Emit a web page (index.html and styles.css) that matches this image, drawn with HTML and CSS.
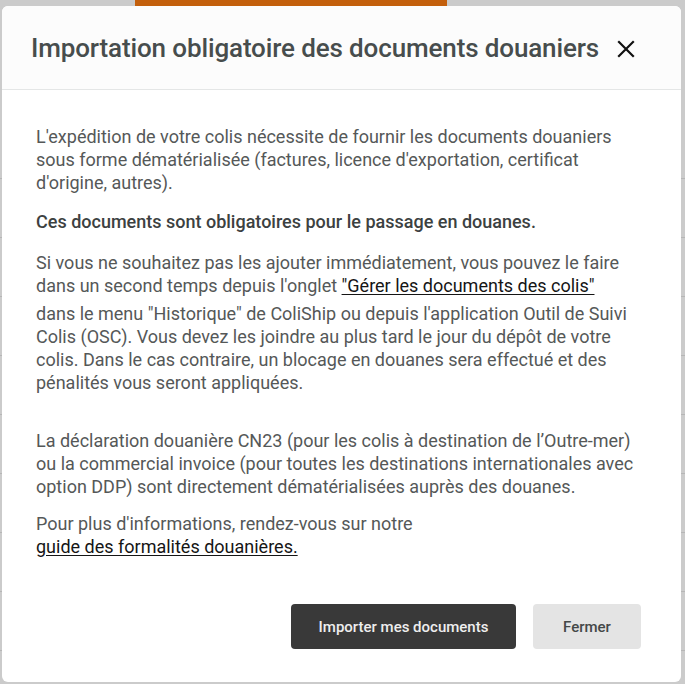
FILE: index.html
```html
<!DOCTYPE html>
<html lang="fr">

<head>
    <meta charset="UTF-8">
    <meta name="viewport" content="width=device-width, initial-scale=1.0">
    <title>ColiShip - Documents douaniers</title>
    <link rel="stylesheet" href="styles.css">
</head>

<body>
    <div class="page">
        <div class="tab-bar">
            <span class="tab-active"></span>
        </div>
        <div class="rows">
            <div class="row"></div>
            <div class="row"></div>
            <div class="row"></div>
            <div class="row"></div>
            <div class="row"></div>
            <div class="row"></div>
            <div class="row"></div>
            <div class="row"></div>
            <div class="row"></div>
        </div>
    </div>

    <div class="modal">
        <div class="modal-header">
            <h2>Importation obligatoire des documents douaniers</h2>
            <button class="close-btn" aria-label="Fermer">
                <svg width="18" height="18" viewBox="0 0 18 18">
                    <path d="M2 2 L16 16 M16 2 L2 16" stroke="#111" stroke-width="2.2" stroke-linecap="square" fill="none" />
                </svg>
            </button>
        </div>

        <div class="modal-body">
            <p>L'expédition de votre colis nécessite de fournir les documents douaniers sous forme dématérialisée (factures, licence d'exportation, certificat d'origine, autres).</p>

            <p class="strong">Ces documents sont obligatoires pour le passage en douanes.</p>

            <p class="tight">Si vous ne souhaitez pas les ajouter immédiatement, vous pouvez le faire dans un second temps depuis l'onglet <a href="#">"Gérer les documents des colis"</a></p>
            <p>dans le menu "Historique" de ColiShip ou depuis l'application Outil de Suivi Colis (OSC). Vous devez les joindre au plus tard le jour du dépôt de votre colis. Dans le cas contraire, un blocage en douanes sera effectué et des pénalités vous seront appliquées.</p>

            <p class="spaced">La déclaration douanière CN23 (pour les colis à destination de l’Outre-mer) ou la commercial invoice (pour toutes les destinations internationales avec option DDP) sont directement dématérialisées auprès des douanes.</p>

            <p>Pour plus d'informations, rendez-vous sur notre<br><a href="#">guide des formalités douanières.</a></p>
        </div>

        <div class="modal-footer">
            <button class="btn btn-dark">Importer mes documents</button>
            <button class="btn btn-light">Fermer</button>
        </div>
    </div>
</body>

</html>
```

FILE: styles.css
```css
* {
    margin: 0;
    padding: 0;
    box-sizing: border-box;
}

body {
    font-family: Roboto, 'Noto Sans', sans-serif;
    background: #cbcbcb;
    width: 685px;
    height: 684px;
    overflow: hidden;
    position: relative;
}

/* page behind the overlay */
.page {
    height: 100%;
}

.tab-bar {
    height: 6px;
    padding-left: 135px;
}

.tab-active {
    display: block;
    width: 312px;
    height: 6px;
    background: #c35f0c;
}

.rows {
    padding-top: 172px;
    display: flex;
    flex-direction: column;
    gap: 58px;
}

.row {
    height: 1px;
    background: #b6b6b6;
}

/* modal */
.modal {
    position: absolute;
    top: 6px;
    left: 2px;
    width: 679px;
    height: 676px;
    background: #fff;
    border-radius: 6px;
    display: flex;
    flex-direction: column;
    overflow: hidden;
}

.modal-header {
    height: 84px;
    display: flex;
    align-items: center;
    justify-content: space-between;
    padding: 0 46px 0 29px;
    background: #fcfcfc;
    border-bottom: 1px solid #e4e6e6;
}

.modal-header h2 {
    font-size: 26px;
    font-weight: 500;
    color: #474d4d;
    letter-spacing: -0.13px;
}

.close-btn {
    background: none;
    border: none;
    cursor: pointer;
    display: flex;
    padding-top: 2px;
}

.modal-body {
    padding: 35px 30px 0 34px;
    font-size: 18px;
    line-height: 23px;
    color: #555858;
}

.modal-body p {
    margin-bottom: 16px;
}

.modal-body p.strong {
    font-weight: 500;
    color: #3c4141;
    margin-bottom: 18px;
}

.modal-body p.tight {
    margin-bottom: 5px;
}

.modal-body p.spaced {
    padding-top: 19px;
    margin-bottom: 14px;
}

.modal-body a {
    color: #151515;
    text-decoration: underline;
    text-underline-offset: 2px;
}

.modal-footer {
    margin-top: auto;
    display: flex;
    justify-content: flex-end;
    gap: 17px;
    padding: 0 40px 33px 0;
}

.btn {
    height: 45px;
    border: none;
    border-radius: 4px;
    font-family: Roboto, sans-serif;
    font-size: 15px;
    font-weight: 500;
    cursor: pointer;
}

.btn-dark {
    width: 225px;
    background: #393939;
    color: #eeeeee;
}

.btn-light {
    width: 108px;
    background: #e4e4e4;
    color: #444848;
}
```
